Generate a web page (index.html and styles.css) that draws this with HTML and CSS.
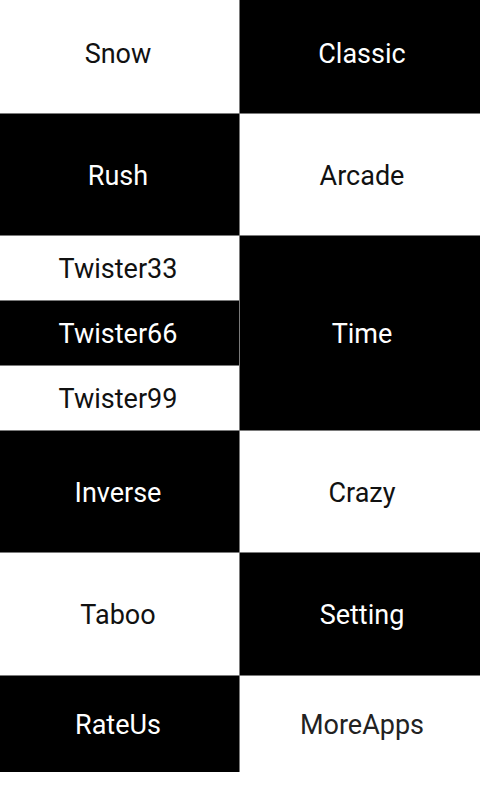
FILE: index.html
```html
<!DOCTYPE html>
<html lang="en">
<head>
    <meta charset="UTF-8">
    <meta name="viewport" content="width=device-width, initial-scale=1.0">
    <title>Menu</title>
    <link rel="stylesheet" href="styles.css">
</head>
<body>
    <!-- mode menu -->
    <div class="menu">
        <div class="tile light left top">Snow</div>
        <div class="tile dark right top">Classic</div>
        <div class="tile dark left">Rush</div>
        <div class="tile light right">Arcade</div>
        <div class="tile light left">Twister33</div>
        <div class="tile dark right time">Time</div>
        <div class="tile dark left">Twister66</div>
        <div class="tile light left">Twister99</div>
        <div class="tile dark left">Inverse</div>
        <div class="tile light right">Crazy</div>
        <div class="tile light left">Taboo</div>
        <div class="tile dark right">Setting</div>
        <div class="tile dark left">RateUs</div>
        <div class="tile light right more">MoreApps</div>
    </div>
</body>
</html>
```

FILE: styles.css
```css
body {
    margin: 0;
    background-color: #fff;
    font-family: Roboto, "Noto Sans", sans-serif;
}
.menu {
    display: grid;
    grid-template-columns: 239px 240px;
    grid-template-rows: 113px 121px 64px 64px 64px 121px 122px 96px;
    gap: 1px;
    background-color: #7a7a7a;
    width: 480px;
}
.tile {
    display: flex;
    align-items: center;
    justify-content: center;
    font-size: 27px;
    padding-top: 2px;
}
.left {
    padding-right: 3px;
}
.right {
    padding-left: 4px;
}
.top {
    padding-top: 0;
    padding-bottom: 6px;
}
.light {
    background-color: #fff;
    color: #111;
}
.dark {
    background-color: #000;
    color: #fff;
}
.time {
    grid-column: 2;
    grid-row: 3 / span 3;
}
.more {
    color: #222;
}
```
